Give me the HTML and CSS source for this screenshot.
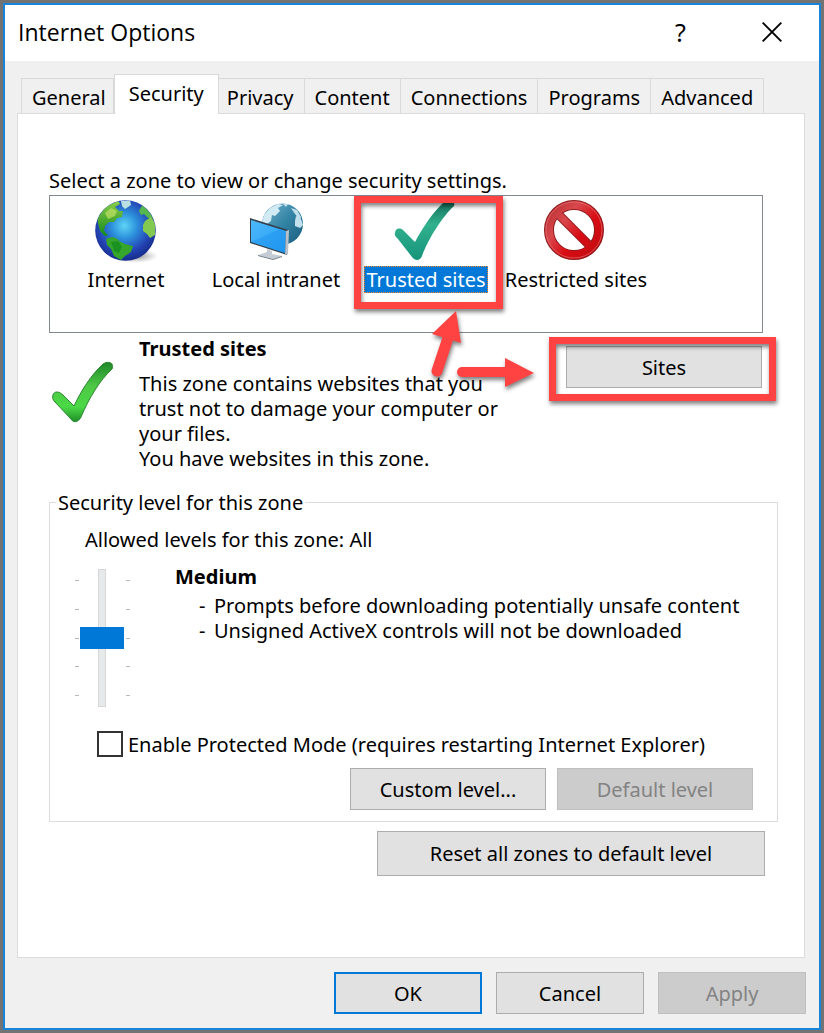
FILE: index.html
```html
<!DOCTYPE html>
<html lang="en">
<head>
<meta charset="utf-8">
<meta name="viewport" content="width=device-width, initial-scale=1">
<title>Internet Options</title>
<link rel="stylesheet" href="styles.css">
</head>
<body>
<div class="window">
  <header class="titlebar">
    <h1 class="title">Internet Options</h1>
    <button class="caption-btn help" aria-label="Help">?</button>
    <button class="caption-btn" aria-label="Close">
      <svg width="20" height="20" viewBox="0 0 20 20"><path d="M.7.7 19.3 19.3M19.3.7.7 19.3" stroke="#000" stroke-width="1.9" fill="none"/></svg>
    </button>
  </header>

  <nav class="tabs" role="tablist">
    <button class="tab" role="tab">General</button>
    <button class="tab active" role="tab" aria-selected="true">Security</button>
    <button class="tab" role="tab">Privacy</button>
    <button class="tab" role="tab">Content</button>
    <button class="tab" role="tab">Connections</button>
    <button class="tab" role="tab">Programs</button>
    <button class="tab" role="tab">Advanced</button>
  </nav>

  <main class="panel">
    <p class="intro">Select a zone to view or change security settings.</p>
    <div class="zones">
      <button class="zone">
        <svg class="zone-icon" viewBox="0 0 64 64">
          <defs>
            <radialGradient id="ocean" cx=".48" cy=".42" r=".58"><stop offset="0" stop-color="#5fd4f4"/><stop offset=".35" stop-color="#2d93dd"/><stop offset=".75" stop-color="#2444b4"/><stop offset="1" stop-color="#162c8c"/></radialGradient>
            <linearGradient id="land" x1="0" y1="0" x2="0" y2="1"><stop offset="0" stop-color="#8fd04a"/><stop offset="1" stop-color="#148a1c"/></linearGradient>
            <radialGradient id="ground"><stop offset="0" stop-color="#555" stop-opacity=".7"/><stop offset="1" stop-color="#888" stop-opacity="0"/></radialGradient>
            <clipPath id="globe-clip"><circle cx="31.500" cy="31.500" r="30"/></clipPath>
          </defs>
          <ellipse cx="42" cy="57" rx="22" ry="7" fill="url(#ground)"/>
          <circle cx="31.500" cy="31.500" r="30.300" fill="url(#ocean)"/>
          <g clip-path="url(#globe-clip)">
            <path d="M4 24 2 14 12 4 24 1 26 5 21 8 25 12 29 12 28 18 23 19 20 23 15 23 11 27 10 32 14 36 11 37 6 32Z" fill="url(#land)"/>
            <path d="M11 14 17 9 23 12 21 17 14 20Z" fill="#c8e568" opacity=".65"/>
            <path d="M27 2 36 1 37 6 31 10 28 7Z" fill="#b9dfe2"/>
            <path d="M47 8 50 5 57 13 60 20 54 19 50 15 47 16 45 12Z" fill="#56b64f"/>
            <path d="M51 22 57 18 62 25 61 36 56 39 53 35 49 32 49 26Z" fill="#83c84f"/>
            <path d="M12 40Q17 37 22 39L27 43 31 45 39 47 37 53 31 57 27 61 20 57 17 50 13 46Z" fill="#35a52c"/>
            <path d="M17 43 24 42 28 48 25 54 20 52Z" fill="#08851a" opacity=".6"/>
          </g>
        </svg>
        <span class="zone-label">Internet</span>
      </button>
      <button class="zone">
        <svg class="zone-icon" viewBox="0 0 64 64">
          <defs>
            <linearGradient id="sea" x1="0" y1="0" x2="1" y2="1"><stop offset="0" stop-color="#75b2cd"/><stop offset=".5" stop-color="#3384a5"/><stop offset="1" stop-color="#1a5b7c"/></linearGradient>
            <linearGradient id="screen" x1="0" y1="0" x2="1" y2="1"><stop offset="0" stop-color="#4db9fb"/><stop offset="1" stop-color="#249bf2"/></linearGradient>
          </defs>
          <circle cx="38.500" cy="25" r="20.500" fill="url(#sea)"/>
          <path d="M18 24 20 16 26 9 34 5 39 6 34 9 36 12 31 17 28 16 27 22 23 25 24 29 20 28Z" fill="#d1eaf3"/>
          <path d="M38 4 44 5 42 8ZM47 9 53 11 57 18 56 21 51 15ZM52 17 57 20 59 26 56 29 51 27 51 22Z" fill="#c2e1ec"/>
          <path d="M6 19 44 31 43 56 6 44Z" fill="#343e48"/>
          <path d="M7 21 42 32 41 54 7 43Z" fill="url(#screen)"/>
          <path d="M7 43 36 30 42 32 41 54Z" fill="#148deb" opacity=".35"/>
          <path d="M42 32 45 31 44 55 41 56Z" fill="#b6c0ca"/>
          <path d="M23 50 28 52 28 55 38 57 29 60 14 56 23 53Z" fill="#c3ccd4"/>
          <path d="M14 56 29 60 38 57 38 58 29 61 14 57Z" fill="#707c87"/>
        </svg>
        <span class="zone-label">Local intranet</span>
      </button>
      <button class="zone selected" aria-pressed="true">
        <svg class="zone-icon" viewBox="0 0 64 64">
          <defs><linearGradient id="teal" x1="0" y1="0" x2="0" y2="1"><stop offset="0" stop-color="#126b57"/><stop offset=".4" stop-color="#32b18e"/><stop offset="1" stop-color="#16947c"/></linearGradient></defs>
          <path d="M1 34C1 30 5 28 9 31L21 43C27 32 37 15 49 4C54 0 62 1 60 7C49 17 34 40 28 57C26 62 21 62 18 58L4 40C2 38 0 36 1 34Z" fill="url(#teal)"/>
        </svg>
        <span class="zone-label">Trusted sites</span>
        <span class="callout callout-zone"></span>
      </button>
      <button class="zone">
        <svg class="zone-icon" viewBox="0 0 64 64">
          <defs><linearGradient id="ban" gradientUnits="userSpaceOnUse" x1="4" y1="8" x2="58" y2="54"><stop offset="0" stop-color="#b93032"/><stop offset=".3" stop-color="#d8484d"/><stop offset=".6" stop-color="#d80d13"/><stop offset="1" stop-color="#be0c10"/></linearGradient></defs>
          <circle cx="30" cy="31" r="25" fill="none" stroke="#8d191b" stroke-width="10"/>
          <path d="M14 15 47 48" stroke="#9a1c20" stroke-width="9"/>
          <circle cx="30" cy="31" r="25" fill="none" stroke="url(#ban)" stroke-width="8"/>
          <path d="M12 13 48 49" stroke="url(#ban)" stroke-width="7"/>
          <circle cx="30" cy="31" r="28" fill="none" stroke="#e8797c" stroke-width="1" opacity=".6"/>
        </svg>
        <span class="zone-label">Restricted sites</span>
      </button>
      <svg class="arrows" width="112" height="80" viewBox="0 0 112 80" aria-hidden="true">
        <g fill="#ff4343" stroke="#ff4343">
          <path d="M11 62 22 29" stroke-width="11" stroke-linecap="round"/>
          <path d="M30 2 35 34 6 25Z" stroke="none"/>
          <path d="M36 63H79" stroke-width="10" stroke-linecap="round"/>
          <path d="M79 49 108 64 79 78Z" stroke="none"/>
        </g>
      </svg>
    </div>

    <section class="detail">
      <svg class="detail-icon" width="64" height="64" viewBox="0 0 64 64">
        <defs><linearGradient id="green" x1="0" y1="0" x2="0" y2="1"><stop offset="0" stop-color="#208728"/><stop offset=".4" stop-color="#4dc845"/><stop offset=".75" stop-color="#4bd947"/><stop offset="1" stop-color="#1f8f27"/></linearGradient></defs>
        <path d="M4 35C5 31 10 31 14 35L25 46C32 31 42 15 54 4C60 0 66 4 63 9C51 20 40 38 32 57C29 63 24 63 21 58L6 42C4 40 3 38 4 35Z" fill="url(#green)" stroke="#2b8530" stroke-width="1"/>
      </svg>
      <div class="detail-text">
        <h2 class="heading">Trusted sites</h2>
        <p>This zone contains websites that you trust not to damage your computer or your files.</p>
        <p>You have websites in this zone.</p>
      </div>
      <div class="sites">
        <button class="btn">Sites</button>
        <span class="callout callout-sites"></span>
      </div>
    </section>

    <fieldset class="level">
      <legend>Security level for this zone</legend>
      <label class="allowed" for="level">Allowed levels for this zone: All</label>
      <div class="level-row">
        <div class="slider">
          <div class="ticks"><i></i><i></i><i></i><i></i><i></i></div>
          <input class="range" id="level" type="range" min="0" max="4" value="2">
          <div class="ticks"><i></i><i></i><i></i><i></i><i></i></div>
        </div>
        <div class="level-text">
          <h2 class="heading">Medium</h2>
          <ul>
            <li>Prompts before downloading potentially unsafe content</li>
            <li>Unsigned ActiveX controls will not be downloaded</li>
          </ul>
        </div>
      </div>
      <label class="protect"><input type="checkbox" class="check">Enable Protected Mode (requires restarting Internet Explorer)</label>
      <div class="level-actions">
        <button class="btn">Custom level...</button>
        <button class="btn" disabled>Default level</button>
      </div>
    </fieldset>
    <button class="btn reset">Reset all zones to default level</button>
  </main>

  <footer class="actions">
    <button class="btn primary">OK</button>
    <button class="btn">Cancel</button>
    <button class="btn" disabled>Apply</button>
  </footer>
</div>
</body>
</html>
```
FILE: styles.css
```css
* { box-sizing: border-box; }

body {
  margin: 0;
  min-height: 100vh;
  padding: 3px;
  display: flex;
  background: #737373;
  color: #000;
  font: 20px/25px Tahoma, "Noto Sans", sans-serif;
}

h1, h2, p, ul { margin: 0; padding: 0; }
button { font: inherit; color: inherit; margin: 0; }

.window {
  flex: 1;
  min-width: 0;
  display: flex;
  flex-direction: column;
  background: #f0f0f0;
  border: 2px solid #1883d7;
}

.titlebar {
  display: flex;
  align-items: center;
  height: 56px;
  padding: 0 2px 2px 13px;
  background: #fff;
}
.title { flex: 1; font: 23px/30px "Segoe UI", "Open Sans", sans-serif; }
.caption-btn {
  width: 91px;
  height: 54px;
  padding: 0;
  border: 0;
  background: none;
  display: flex;
  align-items: center;
  justify-content: center;
}
.help { font-size: 25px; }

.tabs {
  display: flex;
  align-items: flex-end;
  height: 52px;
  padding-left: 16px;
}
.tab {
  height: 35px;
  padding: 2px 10px 0;
  border: 1px solid #d9d9d9;
  border-width: 1px 1px 0 0;
  background: #f0f0f0;
}
.tab:first-child { border-left-width: 1px; padding-right: 7px; }
.tab.active {
  position: relative;
  z-index: 1;
  height: 40px;
  margin-bottom: -1px;
  padding: 0 14px 2px;
  border-left-width: 1px;
  background: #fff;
}
.tab.active + .tab { padding-left: 8px; }

.panel {
  flex: 1;
  display: flex;
  flex-direction: column;
  margin: 0 14px 0 12px;
  padding: 54px 26px 16px 31px;
  background: #fff;
  border: 1px solid #dcdcdc;
}

.intro { margin-bottom: 2px; }

.zones {
  position: relative;
  display: flex;
  height: 138px;
  margin-right: 15px;
  padding: 3px 1px 1px;
  border: 1px solid #828790;
}
.zone {
  position: relative;
  width: 150px;
  padding: 0;
  border: 0;
  background: none;
  display: flex;
  flex-direction: column;
  align-items: center;
  white-space: nowrap;
}
.zone-icon { width: 64px; height: 64px; margin-bottom: 3px; }
.zone-label { padding: 0 1px; border: 1px solid transparent; }
.selected .zone-label { background: #0078d7; border: 1px dotted #ff8728; color: #fff; }

.callout {
  position: absolute;
  border: 7px solid #ff4343;
  filter: drop-shadow(1px 3px 2px rgba(0, 0, 0, .5));
  pointer-events: none;
}
.callout-zone { top: -3px; left: 3px; width: 149px; height: 113px; }
.callout-sites { inset: -9px -14px -13px -17px; }
.arrows {
  position: absolute;
  top: 113px;
  left: 376px;
  z-index: 1;
  filter: drop-shadow(1px 3px 2px rgba(0, 0, 0, .5));
}

.detail {
  display: flex;
  align-items: flex-start;
  margin-right: 16px;
  padding-top: 3px;
}
.detail-icon { flex: none; margin: 24px 26px 0 0; }
.detail-text { width: 370px; }
.heading { font-size: 20px; line-height: 25px; font-weight: 700; }
.detail-text .heading { margin-bottom: 10px; }
.sites { position: relative; margin: 10px 0 0 auto; }

.btn {
  min-width: 148px;
  height: 42px;
  padding: 0 12px;
  border: 1px solid #adadad;
  background: #e1e1e1;
}
.btn:disabled { background: #ccc; border-color: #bfbfbf; color: #838383; }
.btn.primary { border: 2px solid #0078d7; }
.sites .btn { display: block; width: 196px; }

.level {
  min-width: 0;
  margin: 19px 0 0;
  padding: 12px 24px 11px 35px;
  border: 1px solid #dcdcdc;
}
.level legend { margin-left: -29px; padding: 0 2px; }
.allowed { display: block; margin-bottom: 12px; }
.level-row { display: flex; }
.slider { display: flex; margin: 5px 0 0 -10px; }
.ticks {
  display: flex;
  flex-direction: column;
  justify-content: space-between;
  height: 138px;
  padding: 11px 0;
}
.ticks i { width: 4px; height: 1px; background: #b8b8b8; }
.range {
  appearance: none;
  writing-mode: vertical-lr;
  direction: rtl;
  width: 44px;
  height: 138px;
  margin: 0 2px 0 1px;
  background: none;
}
.range::-webkit-slider-runnable-track {
  width: 8px;
  background: #e7eaea;
  border: 1px solid #d6d6d6;
}
.range::-webkit-slider-thumb {
  appearance: none;
  width: 44px;
  height: 22px;
  margin-left: -19px;
  background: #0078d7;
}
.level-text { margin-left: 45px; }
.level-text ul { margin: 4px 0 0 24px; list-style: none; }
.level-text li { display: flex; }
.level-text li::before { content: "-"; width: 15px; }
.protect { display: flex; align-items: center; gap: 5px; margin: 24px 0 11px 12px; }
.check {
  appearance: none;
  flex: none;
  width: 26px;
  height: 26px;
  margin: 0;
  border: 2px solid #333;
  background: #fff;
}
.level-actions { display: flex; justify-content: flex-end; gap: 11px; }
.level-actions .btn { width: 196px; }
.reset { align-self: flex-end; width: 388px; height: 45px; margin: 9px 13px 0 0; }

.actions {
  display: flex;
  justify-content: flex-end;
  gap: 14px;
  padding: 14px 13px;
}
```
